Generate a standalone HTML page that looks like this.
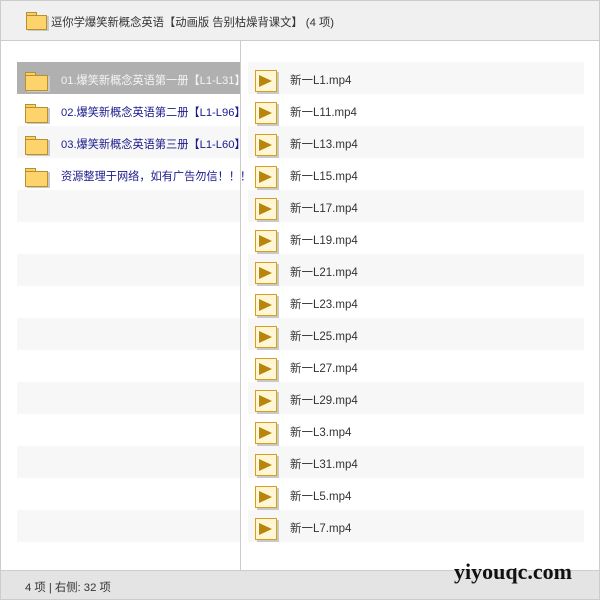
<!DOCTYPE html><html><head><meta charset="utf-8"><style>
*{margin:0;padding:0;box-sizing:border-box}
body{width:600px;height:600px;position:relative;background:#fff;font-family:"Liberation Sans","Noto Sans CJK SC",sans-serif;font-size:11px;overflow:hidden}
.frame{position:absolute;left:0;top:0;width:600px;height:600px;border:1px solid #ccc}
.hdr{position:absolute;left:0;top:0;width:600px;height:41px;background:#f0f0f0;border:1px solid #ccc}
.hdr span{position:absolute;left:50px;top:13px;color:#333;font-size:11.3px}
.fold{position:absolute;width:21px;height:17px}
.fold:before{content:"";position:absolute;left:0;top:0;width:9px;height:4px;background:#f9cf6a;border:1px solid #b8912d;border-bottom:none}
.fold:after{content:"";position:absolute;left:0;top:3px;width:21px;height:14px;background:#fdd36c;border:1px solid #b8912d;box-shadow:2px 1px 0 #c9c9c9}
.hf{width:19px;height:16px}
.hf:after{width:19px;height:13px}
.div{position:absolute;left:240px;top:41px;width:1px;height:529px;background:#ccc}
.row{position:absolute;height:32px}
.l{left:17px;width:223px}
.r{left:248px;width:336px}
.g{background:#f7f7f7}
.sel{background:#b0b0b0}
.lt{position:absolute;left:44px;top:10px;color:#1a1a8c;white-space:nowrap;font-size:11.2px}
.sel .lt{color:#f4f4f4}
.rt{position:absolute;left:42px;top:10px;color:#333;font-size:11.5px}
.vid{position:absolute;left:7px;top:8px;width:22px;height:22px;background:#fff6d6;border:1px solid #d4a017;box-shadow:2px 2px 0 #c9c9c9}
.vid:after{content:"";position:absolute;left:3px;top:4px;border-left:13px solid #b8860b;border-top:6px solid transparent;border-bottom:6px solid transparent}
.ft{position:absolute;left:0;top:570px;width:600px;height:30px;background:#e4e4e4;border:1px solid #ccc}
.ft span{position:absolute;left:24px;top:8px;color:#333;font-size:11.3px}
.wm{position:absolute;left:454px;top:560px;font-family:"Liberation Serif",serif;font-weight:bold;font-size:22px;color:#111;z-index:5;line-height:24px}
</style></head><body>
<div class="frame"></div>
<div class="hdr"><div class="fold hf" style="left:25px;top:11px"></div><span>逗你学爆笑新概念英语【动画版 告别枯燥背课文】 (4 项)</span></div>
<div class="div"></div>
<div class="row l sel" style="top:62px"><div class="fold" style="left:8px;top:10px"></div><span class="lt">01.爆笑新概念英语第一册【L1-L31】</span></div>
<div class="row l" style="top:94px"><div class="fold" style="left:8px;top:10px"></div><span class="lt">02.爆笑新概念英语第二册【L1-L96】</span></div>
<div class="row l g" style="top:126px"><div class="fold" style="left:8px;top:10px"></div><span class="lt">03.爆笑新概念英语第三册【L1-L60】</span></div>
<div class="row l" style="top:158px"><div class="fold" style="left:8px;top:10px"></div><span class="lt">资源整理于网络，如有广告勿信！！！</span></div>
<div class="row l g" style="top:190px"></div><div class="row l g" style="top:254px"></div><div class="row l g" style="top:318px"></div><div class="row l g" style="top:382px"></div><div class="row l g" style="top:446px"></div><div class="row l g" style="top:510px"></div>
<div class="row r g" style="top:62px"><div class="vid"></div><span class="rt">新一L1.mp4</span></div>
<div class="row r" style="top:94px"><div class="vid"></div><span class="rt">新一L11.mp4</span></div>
<div class="row r g" style="top:126px"><div class="vid"></div><span class="rt">新一L13.mp4</span></div>
<div class="row r" style="top:158px"><div class="vid"></div><span class="rt">新一L15.mp4</span></div>
<div class="row r g" style="top:190px"><div class="vid"></div><span class="rt">新一L17.mp4</span></div>
<div class="row r" style="top:222px"><div class="vid"></div><span class="rt">新一L19.mp4</span></div>
<div class="row r g" style="top:254px"><div class="vid"></div><span class="rt">新一L21.mp4</span></div>
<div class="row r" style="top:286px"><div class="vid"></div><span class="rt">新一L23.mp4</span></div>
<div class="row r g" style="top:318px"><div class="vid"></div><span class="rt">新一L25.mp4</span></div>
<div class="row r" style="top:350px"><div class="vid"></div><span class="rt">新一L27.mp4</span></div>
<div class="row r g" style="top:382px"><div class="vid"></div><span class="rt">新一L29.mp4</span></div>
<div class="row r" style="top:414px"><div class="vid"></div><span class="rt">新一L3.mp4</span></div>
<div class="row r g" style="top:446px"><div class="vid"></div><span class="rt">新一L31.mp4</span></div>
<div class="row r" style="top:478px"><div class="vid"></div><span class="rt">新一L5.mp4</span></div>
<div class="row r g" style="top:510px"><div class="vid"></div><span class="rt">新一L7.mp4</span></div>
<div class="ft"><span>4 项 | 右侧: 32 项</span></div>
<div class="wm">yiyouqc.com</div>
</body></html>
